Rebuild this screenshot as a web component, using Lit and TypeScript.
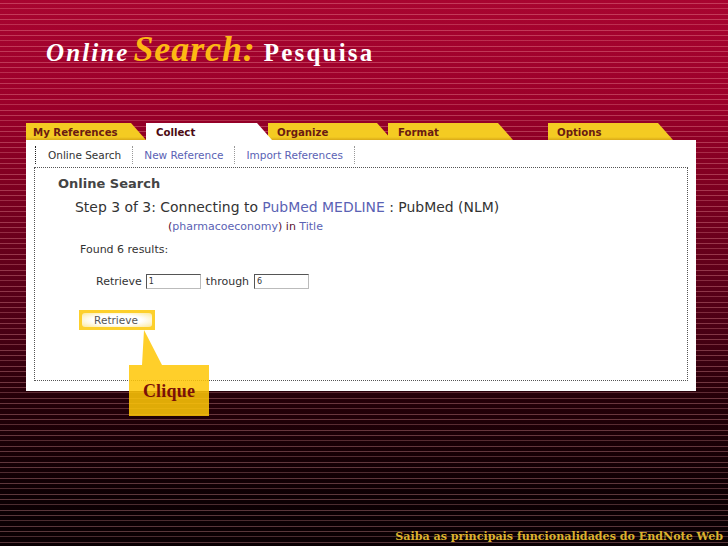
import { LitElement, html, css } from 'lit';
import { customElement } from 'lit/decorators.js';

const TABS = [
  { label: 'My References', width: 120, offset: 0, inset: 7 },
  { label: 'Collect', width: 126, offset: 0, inset: 10, active: true },
  { label: 'Organize', width: 124, offset: -4, inset: 9 },
  { label: 'Format', width: 125, offset: -4, inset: 10 },
  { label: 'Options', width: 125, offset: 35, inset: 9 },
];

@customElement('app-root')
export class AppRoot extends LitElement {
  static styles = css`
    :host {
      display: block;
      position: relative;
      width: 728px;
      height: 546px;
      overflow: hidden;
      font-family: 'DejaVu Sans', Verdana, sans-serif;
      background:
        repeating-linear-gradient(
          to bottom,
          transparent 0 3px,
          rgba(255, 170, 175, 0.32) 3px 4px,
          transparent 4px 8px,
          rgba(255, 170, 175, 0.26) 8px 9px,
          transparent 9px 14px,
          rgba(255, 170, 175, 0.32) 14px 15px,
          transparent 15px 16px
        ),
        linear-gradient(to bottom, #a80430 0, #9c002a 100px, #7c0020 190px, #4a0014 330px, #240008 400px, #0c0003 500px, #0a0003 546px);
    }

    .title {
      display: flex;
      align-items: baseline;
      margin: 0;
      height: 123px;
      box-sizing: border-box;
      padding: 29px 0 0 46px;
      font-family: 'Liberation Serif', 'Times New Roman', serif;
      font-weight: 700;
      font-size: 25px;
      line-height: 40px;
      letter-spacing: 2.2px;
      color: #fff;
      white-space: nowrap;
    }
    .title .lead {
      font-style: italic;
      letter-spacing: 2.1px;
      margin-right: 4px;
    }
    .title .accent {
      font-style: italic;
      font-size: 36px;
      letter-spacing: 0.9px;
      color: #fdb813;
      margin-right: 8px;
    }

    .tabs {
      display: flex;
      height: 17px;
      margin-left: 26px;
    }
    .tab {
      box-sizing: border-box;
      height: 17px;
      padding-top: 2px;
      font-size: 10.2px;
      font-weight: 700;
      line-height: 15px;
      color: #6a1a12;
      background: linear-gradient(to bottom, #f4cb22 0 14px, #d8a818 17px);
      clip-path: polygon(0 0, calc(100% - 15px) 0, 100% 100%, 0 100%);
    }
    .tab.active {
      position: relative;
      z-index: 1;
      color: #4c0a12;
      background: #fff;
    }

    .panel {
      box-sizing: border-box;
      width: 670px;
      height: 251px;
      margin-left: 26px;
      padding: 6px 8px 10px;
      background: #fff;
    }

    .subnav {
      display: flex;
      height: 18px;
      margin-left: 1px;
      font-size: 10.5px;
      line-height: 18px;
    }
    .subnav a {
      padding: 0 11px;
      border-left: 1px dotted #999;
      color: #5a62b4;
    }
    .subnav a:first-child {
      padding-left: 12px;
      color: #333;
      border-left-color: #222;
    }
    .subnav a:last-child {
      border-right: 1px dotted #999;
    }

    .box {
      box-sizing: border-box;
      height: 214px;
      margin-top: 3px;
      padding: 8px 0 0 23px;
      border: 1px dotted #555;
      color: #333;
    }
    h2 {
      margin: 0;
      font-size: 13px;
      line-height: 16px;
      font-weight: 700;
      color: #444;
    }
    .step {
      margin: 6px 0 0 17px;
      font-size: 13.95px;
      line-height: 18px;
    }
    .query {
      margin: 3px 0 0 110px;
      font-size: 11px;
      line-height: 16px;
      color: #5a1030;
    }
    .link {
      color: #5a62b4;
    }
    .found {
      margin: 7px 0 0 22px;
      font-size: 11px;
      line-height: 16px;
    }
    .range {
      display: flex;
      align-items: center;
      height: 16px;
      margin: 15px 0 0 38px;
      font-size: 11px;
    }
    .range input {
      box-sizing: border-box;
      width: 55px;
      height: 15px;
      margin: 0 5px;
      padding: 0 2px;
      border: 1px solid #bbb;
      border-top-color: #555;
      border-left-color: #555;
      border-radius: 0;
      background: #fff;
      font: 8px 'DejaVu Sans', sans-serif;
      color: #333;
    }
    .range input:first-of-type {
      margin-left: 4px;
    }
    .highlight {
      box-sizing: border-box;
      width: 76px;
      height: 20px;
      margin: 21px 0 0 21px;
      padding: 3px;
      background: #fdd02c;
    }
    .highlight button {
      display: block;
      width: 100%;
      height: 100%;
      padding: 0 2px 0 0;
      border: 0;
      border-radius: 3px;
      background: radial-gradient(ellipse at center, #fff 50%, #fbe89a 100%);
      font: 10.5px 'DejaVu Sans', sans-serif;
      color: #555;
    }

    .callout {
      position: absolute;
      left: 129px;
      top: 330px;
      width: 80px;
      height: 86px;
    }
    .callout svg {
      display: block;
      position: absolute;
      inset: 0;
    }
    .callout span {
      position: absolute;
      left: 0;
      right: 0;
      top: 35px;
      height: 51px;
      font-family: 'Liberation Serif', 'Times New Roman', serif;
      font-weight: 700;
      font-size: 18px;
      letter-spacing: 0.2px;
      line-height: 53px;
      text-align: center;
      color: #7a1008;
    }

    .footer {
      position: absolute;
      right: 5px;
      bottom: 1px;
      font-family: 'DejaVu Serif', Georgia, serif;
      font-weight: 700;
      font-size: 11.1px;
      line-height: 16px;
      color: #dcb22e;
      white-space: nowrap;
    }
  `;

  render() {
    return html`
      <h1 class="title">
        <span class="lead">Online</span>
        <span class="accent">Search:</span>
        <span>Pesquisa</span>
      </h1>

      <nav class="tabs">
        ${TABS.map(
          (t) => html`
            <div
              class="tab ${t.active ? 'active' : ''}"
              style="width:${t.width}px;margin-left:${t.offset}px;padding-left:${t.inset}px"
            >
              ${t.label}
            </div>
          `
        )}
      </nav>

      <section class="panel">
        <div class="subnav">
          <a>Online Search</a>
          <a>New Reference</a>
          <a>Import References</a>
        </div>
        <div class="box">
          <h2>Online Search</h2>
          <div class="step">
            Step 3 of 3: Connecting to <span class="link">PubMed MEDLINE</span> : PubMed (NLM)
          </div>
          <div class="query">
            (<span class="link">pharmacoeconomy</span>) in <span class="link">Title</span>
          </div>
          <div class="found">Found 6 results:</div>
          <div class="range">
            <span>Retrieve</span>
            <input value="1" />
            <span>through</span>
            <input value="6" />
          </div>
          <div class="highlight"><button>Retrieve</button></div>
        </div>
      </section>

      <div class="callout">
        <svg width="80" height="86" viewBox="0 0 80 86">
          <path d="M15 0L33 35H80V86H0V35H13Z" fill="#ffc707" fill-opacity="0.86" />
        </svg>
        <span>Clique</span>
      </div>

      <div class="footer">Saiba as principais funcionalidades do EndNote Web</div>
    `;
  }
}
